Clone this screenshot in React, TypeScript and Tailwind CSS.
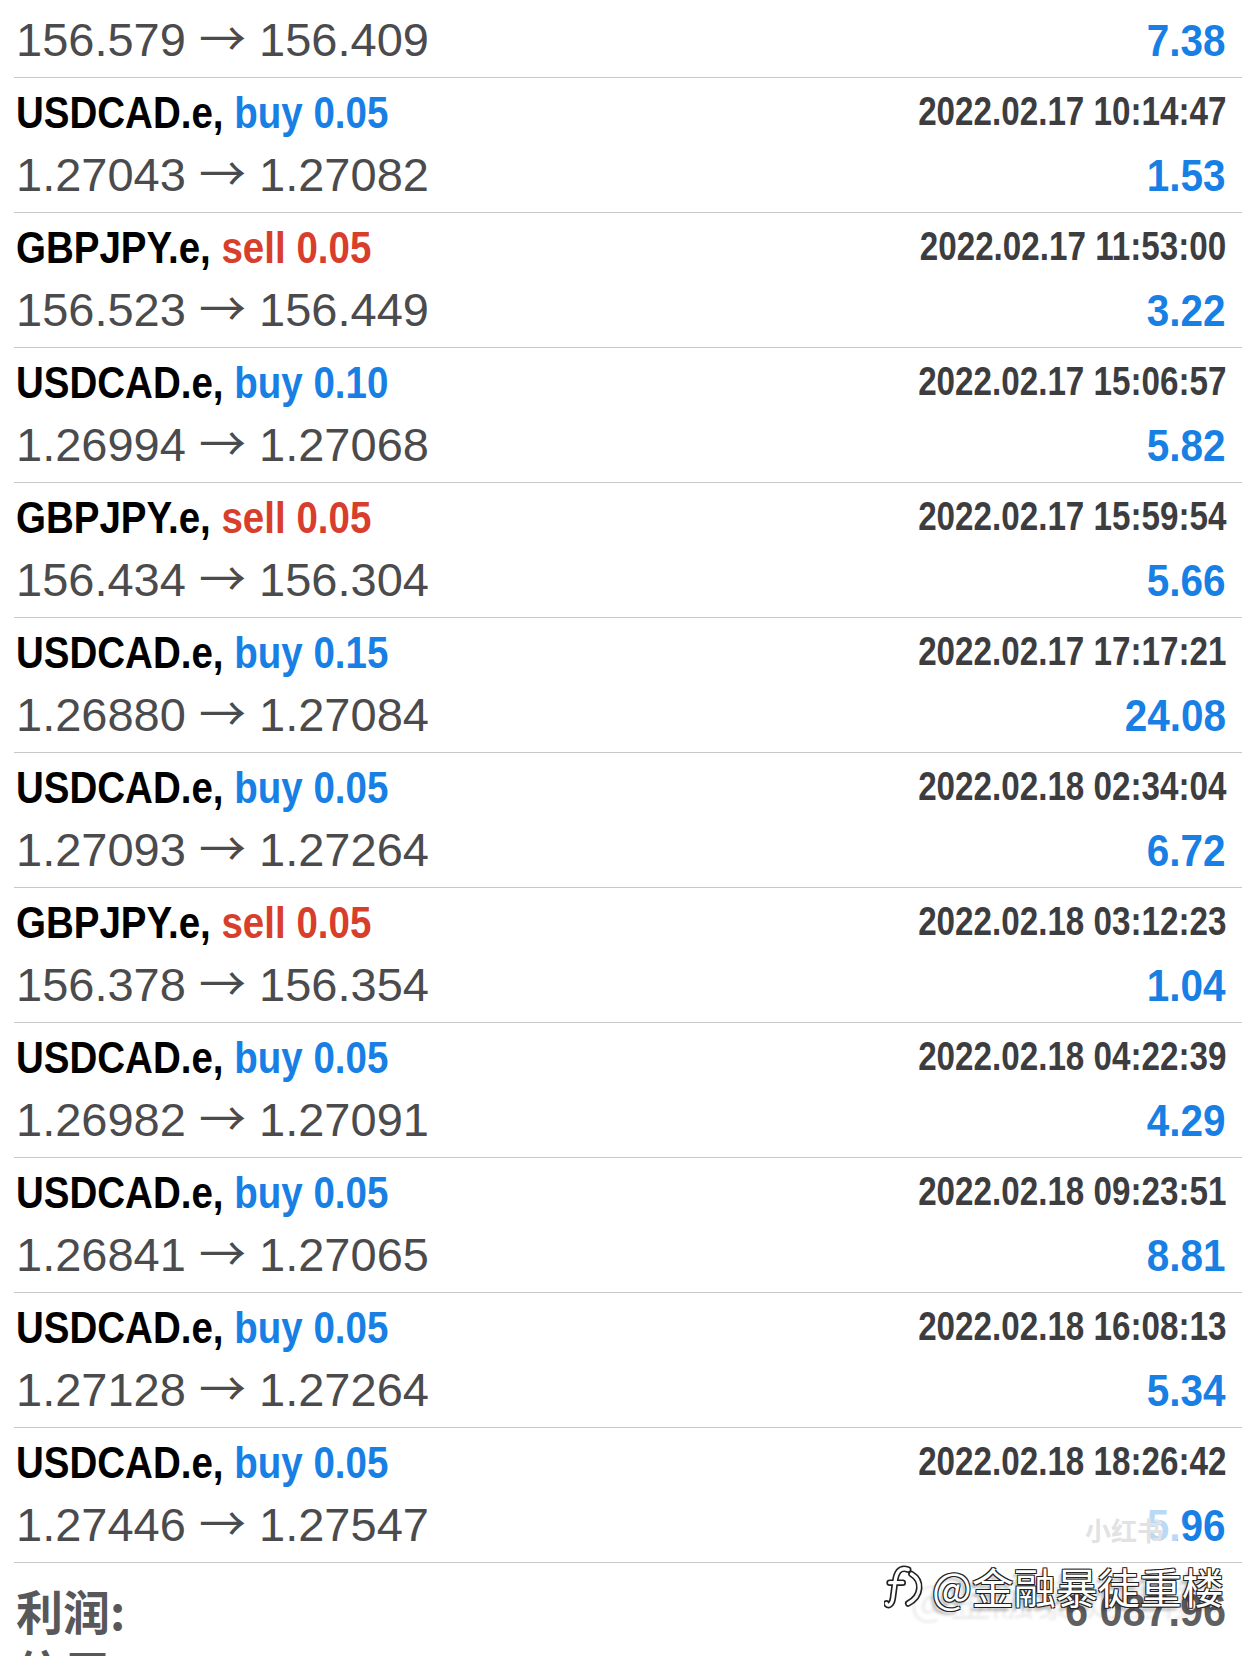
type Trade = {
  sym: string;
  side: "buy" | "sell";
  vol: string;
  time: string;
  open: string;
  close: string;
  profit: string;
};

const trades: Trade[] = [
  { sym: "GBPJPY.e", side: "sell", vol: "0.05", time: "2022.02.17 09:41:18", open: "156.579", close: "156.409", profit: "7.38" },
  { sym: "USDCAD.e", side: "buy", vol: "0.05", time: "2022.02.17 10:14:47", open: "1.27043", close: "1.27082", profit: "1.53" },
  { sym: "GBPJPY.e", side: "sell", vol: "0.05", time: "2022.02.17 11:53:00", open: "156.523", close: "156.449", profit: "3.22" },
  { sym: "USDCAD.e", side: "buy", vol: "0.10", time: "2022.02.17 15:06:57", open: "1.26994", close: "1.27068", profit: "5.82" },
  { sym: "GBPJPY.e", side: "sell", vol: "0.05", time: "2022.02.17 15:59:54", open: "156.434", close: "156.304", profit: "5.66" },
  { sym: "USDCAD.e", side: "buy", vol: "0.15", time: "2022.02.17 17:17:21", open: "1.26880", close: "1.27084", profit: "24.08" },
  { sym: "USDCAD.e", side: "buy", vol: "0.05", time: "2022.02.18 02:34:04", open: "1.27093", close: "1.27264", profit: "6.72" },
  { sym: "GBPJPY.e", side: "sell", vol: "0.05", time: "2022.02.18 03:12:23", open: "156.378", close: "156.354", profit: "1.04" },
  { sym: "USDCAD.e", side: "buy", vol: "0.05", time: "2022.02.18 04:22:39", open: "1.26982", close: "1.27091", profit: "4.29" },
  { sym: "USDCAD.e", side: "buy", vol: "0.05", time: "2022.02.18 09:23:51", open: "1.26841", close: "1.27065", profit: "8.81" },
  { sym: "USDCAD.e", side: "buy", vol: "0.05", time: "2022.02.18 16:08:13", open: "1.27128", close: "1.27264", profit: "5.34" },
  { sym: "USDCAD.e", side: "buy", vol: "0.05", time: "2022.02.18 18:26:42", open: "1.27446", close: "1.27547", profit: "5.96" },
];

// no condensed face installed, so bold text gets squeezed with scale-x
const bold = "font-['Liberation_Sans','Helvetica',sans-serif] font-bold";
const regular = "font-['Liberation_Sans','Helvetica',sans-serif] font-normal";
const cjk = "font-['Noto_Sans_CJK_SC','Noto_Sans',sans-serif]";

const TradeRow = ({ t }: { t: Trade }) => {
  const sideColor = t.side === "buy" ? "text-[#187fe4]" : "text-[#d83e2c]";

  return (
    <div className="border-t border-[#c8c8c8] pl-[2px] pr-[16px] pt-[13px] pb-[14px]">
      <div className="flex h-[44px] items-start justify-between">
        <div
          className={`${bold} inline-block origin-left scale-x-[0.875] text-[44px] leading-[44px] whitespace-nowrap text-black`}
        >
          {t.sym},{" "}
          <span className={sideColor}>
            {t.side} {t.vol}
          </span>
        </div>
        <div
          className={`${bold} inline-block origin-right scale-x-[0.83] text-[40px] leading-[40px] whitespace-nowrap text-[#3d3d3f]`}
        >
          {t.time}
        </div>
      </div>

      <div className="mt-[16px] flex h-[47px] items-baseline justify-between">
        <div className={`${regular} text-[47px] leading-[47px] whitespace-nowrap text-[#4b4b4d]`}>
          {t.open} <span className={`${cjk} font-normal leading-[36px]`}>→</span> {t.close}
        </div>
        <div
          className={`${bold} inline-block origin-right scale-x-[0.92] text-[44px] leading-[47px] text-[#187fe4]`}
        >
          {t.profit}
        </div>
      </div>
    </div>
  );
};

const App = () => {
  return (
    <div className="relative h-[1656px] w-[1242px] overflow-hidden bg-white">
      <div className="-mt-[58px] pl-[14px]">
        {trades.map((t, i) => (
          <TradeRow key={i} t={t} />
        ))}

        {/* summary */}
        <div className="border-t border-[#c8c8c8] pl-[2px] pr-[16px] pt-[17px]">
          <div className="flex h-[60px] items-center justify-between">
            <span className={`${cjk} text-[47px] font-bold leading-[60px] text-[#58585a]`}>利润:</span>
            <span
              className={`${bold} inline-block origin-right scale-x-[0.9] text-[46px] leading-[60px] text-[#606062]`}
            >
              6 087.96
            </span>
          </div>
          <div className="flex h-[60px] items-center">
            <span className={`${cjk} text-[47px] font-bold leading-[60px] text-[#58585a]`}>信用:</span>
          </div>
        </div>
      </div>

      {/* 小红书 watermark pill */}
      <div className="absolute left-[1068px] top-[1504px] flex h-[50px] w-[112px] items-center justify-center rounded-full bg-white/70 shadow-[0_0_6px_rgba(255,255,255,0.9)]">
        <span className={`${cjk} text-[26px] font-bold text-[#e2e2e2]`}>小红书</span>
      </div>

      {/* author watermark */}
      <div className="absolute left-[884px] top-[1562px] flex items-center gap-[4px]">
        <svg width="44" height="48" viewBox="0 0 40 44" fill="none">
          <g strokeLinecap="round" strokeLinejoin="round">
            <path d="M22 7 C14 4 11 10 10 18 L8 33 C7 40 3 41 2 38" stroke="#222" strokeWidth="6" />
            <path d="M5 19 H17" stroke="#222" strokeWidth="6" />
            <path d="M25 11 C35 17 35 31 22 38" stroke="#222" strokeWidth="6" />
            <path d="M22 7 C14 4 11 10 10 18 L8 33 C7 40 3 41 2 38" stroke="#fff" strokeWidth="3" />
            <path d="M5 19 H17" stroke="#fff" strokeWidth="3" />
            <path d="M25 11 C35 17 35 31 22 38" stroke="#fff" strokeWidth="3" />
          </g>
        </svg>
        <span
          className={`${cjk} text-[42px] font-normal leading-[44px] whitespace-nowrap text-white [text-shadow:-1px_-1px_0_#222,1px_-1px_0_#222,-1px_1px_0_#222,1px_1px_0_#222,-3px_4px_3px_rgba(0,0,0,0.25),-22px_12px_3px_rgba(0,0,0,0.08)]`}
        >
          @金融暴徒重楼
        </span>
      </div>
    </div>
  );
};

export default App;
